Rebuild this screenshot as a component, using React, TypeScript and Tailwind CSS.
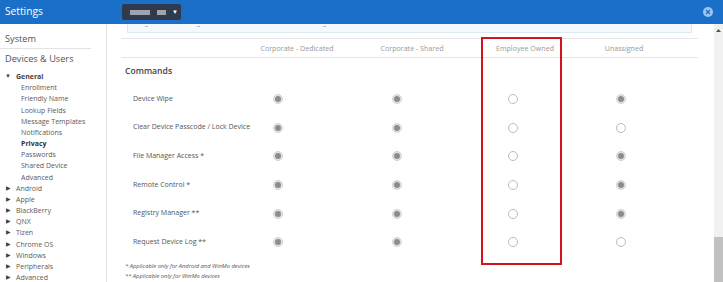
import React from 'react';

const FONT = { fontFamily: '"Open Sans", "Liberation Sans", sans-serif' };

const platforms = ['Android', 'Apple', 'BlackBerry', 'QNX', 'Tizen', 'Chrome OS', 'Windows', 'Peripherals', 'Advanced'];
const generalItems = ['Enrollment', 'Friendly Name', 'Lookup Fields', 'Message Templates', 'Notifications', 'Privacy', 'Passwords', 'Shared Device', 'Advanced'];

const commands: { label: string; values: boolean[] }[] = [
  { label: 'Device Wipe', values: [true, true, false, true] },
  { label: 'Clear Device Passcode / Lock Device', values: [true, true, false, false] },
  { label: 'File Manager Access *', values: [true, true, false, true] },
  { label: 'Remote Control *', values: [true, true, false, true] },
  { label: 'Registry Manager **', values: [true, true, false, true] },
  { label: 'Request Device Log **', values: [true, true, false, false] },
];

function Radio({ checked }: { checked: boolean }) {
  if (checked) {
    return (
      <span className="flex h-[10px] w-[10px] items-center justify-center rounded-full border border-[#d2d2d2] bg-[#e4e4e4]">
        <span className="h-[6px] w-[6px] rounded-full bg-[#8c8c8c]" />
      </span>
    );
  }
  return <span className="block h-[10px] w-[10px] rounded-full border border-[#bcbcbc] bg-white" />;
}

function Sidebar() {
  return (
    <div className="w-[107px] shrink-0 border-r border-[#e3e3e3] bg-white">
      <div className="mr-[15px] border-b border-[#e3e3e3] pb-[2px] pl-[5px] pt-[8px] text-[9.2px] leading-[14px] text-[#555]">System</div>
      <div className="mt-[3px] pl-[5px] text-[9.2px] leading-[14px] text-[#555]">Devices &amp; Users</div>
      <div className="mt-[5px] text-[7px] leading-[11.17px] text-[#5a5a5a]">
        <div className="flex items-center font-bold text-[#444]">
          <span className="ml-[5px] w-[11px] text-[6px] text-[#444]">▼</span>
          General
        </div>
        {generalItems.map((item) => (
          <div key={item} className={item === 'Privacy' ? 'pl-[21px] font-bold text-[#333]' : 'pl-[21px]'}>
            {item}
          </div>
        ))}
        {platforms.map((p) => (
          <div key={p} className="flex items-center">
            <span className="ml-[6px] w-[10px] text-[5.5px] text-[#444]">▶</span>
            {p}
          </div>
        ))}
      </div>
    </div>
  );
}

export default function App() {
  return (
    <div className="relative h-[282px] w-[723px] overflow-hidden bg-white" style={FONT}>
      {/* top bar */}
      <div className="flex h-[24px] items-center bg-[#1a6fc9]">
        <div className="w-[122px] pl-[5px] text-[10.2px] text-white">Settings</div>
        <div className="flex h-[16px] w-[59px] items-center rounded-[2px] bg-[#2f3b4c] pl-[8px]">
          <span className="h-[5px] w-[20px] bg-[#9ea4ad]" />
          <span className="ml-[7px] h-[5px] w-[9px] bg-[#9ea4ad]" />
          <span className="ml-[6px] text-[6px] text-white">▼</span>
        </div>
        <div className="ml-auto mr-[10px] flex h-[10px] w-[10px] items-center justify-center rounded-full bg-[#9fc5ee]">
          <svg width="6" height="6" viewBox="0 0 6 6">
            <path d="M1 1 L5 5 M5 1 L1 5" stroke="#1a6fc9" strokeWidth="1.3" />
          </svg>
        </div>
      </div>

      <div className="flex h-[258px]">
        <Sidebar />

        <div className="flex-1 text-[#555]">
          <div className="ml-[20px] flex h-[9px] w-[565px] items-start border border-t-0 border-[#dbe8ef] bg-[#f3f9fc]">
            <span className="ml-[17px] mt-[2px] h-[1px] w-[3px] bg-[#bbb]" />
            <span className="ml-[49px] mt-[2px] h-[1px] w-[3px] bg-[#bbb]" />
            <span className="ml-[123px] mt-[2px] h-[1px] w-[3px] bg-[#bbb]" />
          </div>

          <div className="ml-[14px] mt-[5px] flex h-[20px] w-[577px] items-center border-y border-[#e6e6e6] text-[7.1px] text-[#9a9a9a]">
            <div className="w-[119px]" />
            <div className="w-[114px] text-center">Corporate - Dedicated</div>
            <div className="w-[116px] text-center">Corporate - Shared</div>
            <div className="w-[110px] text-center">Employee Owned</div>
            <div className="w-[88px] text-center">Unassigned</div>
          </div>

          <div className="ml-[18px] mt-[6px] text-[8.6px] font-semibold leading-[14px] text-[#444]">Commands</div>

          <div className="ml-[14px] mt-[6.7px]">
            {commands.map((c) => (
              <div key={c.label} className="flex h-[28.66px] items-center text-[7px] text-[#555]">
                <div className="w-[146.5px] pl-[12px]">{c.label}</div>
                <div className="flex w-[20px] justify-center"><Radio checked={c.values[0]} /></div>
                <div className="ml-[99.5px] flex w-[20px] justify-center"><Radio checked={c.values[1]} /></div>
                <div className="ml-[96px] flex w-[20px] justify-center"><Radio checked={c.values[2]} /></div>
                <div className="ml-[88px] flex w-[20px] justify-center"><Radio checked={c.values[3]} /></div>
              </div>
            ))}
          </div>

          <div className="ml-[18px] mt-[4px] text-[5.8px] italic leading-[10.3px] text-[#555]">
            <div>* Applicable only for Android and WinMo devices</div>
            <div>** Applicable only for WinMo devices</div>
          </div>
        </div>

        {/* scrollbar */}
        <div className="flex w-[9px] shrink-0 flex-col bg-[#f1f1f1]">
          <div className="flex h-[12px] items-center justify-center">
            <svg width="5" height="3" viewBox="0 0 5 3">
              <path d="M0 3 L2.5 0 L5 3 Z" fill="#555" />
            </svg>
          </div>
          <div className="mt-auto h-[45px] bg-[#c1c1c1]" />
        </div>
      </div>

      {/* highlight annotation */}
      <div className="absolute left-[481px] top-[37px] h-[228px] w-[81px] border-2 border-[#d4141c]" />
    </div>
  );
}
